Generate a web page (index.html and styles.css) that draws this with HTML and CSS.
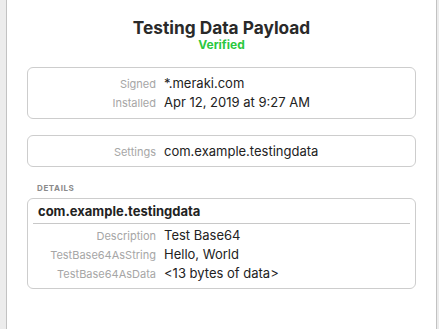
FILE: index.html
```html
<!DOCTYPE html>
<html>
<head>
<meta charset="utf-8">
<link rel="stylesheet" href="styles.css">
</head>
<body>
<div class="panel">
  <header class="head">
    <h1 class="title">Testing Data Payload</h1>
    <div class="status">Verified</div>
  </header>
  <section class="card card-sign">
    <div class="row"><span class="label">Signed</span><span class="value">*.meraki.com</span></div>
    <div class="row"><span class="label">Installed</span><span class="value">Apr 12, 2019 at 9:27 AM</span></div>
  </section>
  <section class="card card-settings">
    <div class="row"><span class="label">Settings</span><span class="value">com.example.testingdata</span></div>
  </section>
  <div class="section-label">DETAILS</div>
  <section class="card card-details">
    <div class="card-title">com.example.testingdata</div>
    <div class="divider"></div>
    <div class="row"><span class="label">Description</span><span class="value">Test Base64</span></div>
    <div class="row"><span class="label">TestBase64AsString</span><span class="value">Hello, World</span></div>
    <div class="row"><span class="label">TestBase64AsData</span><span class="value">&lt;13 bytes of data&gt;</span></div>
  </section>
</div>
</body>
</html>
```

FILE: styles.css
```css
html, body {
  margin: 0;
  padding: 0;
  background: #ececec;
  height: 100%;
}
body {
  font-family: Inter, "Liberation Sans", sans-serif;
  color: #242424;
}
.panel {
  margin-left: 6px;
  width: 431px;
  height: 329px;
  box-sizing: border-box;
  background: #fff;
  border-left: 1px solid #c2c2c2;
  border-right: 1px solid #c2c2c2;
  padding: 17px 20px 0 20px;
}
.head {
  text-align: center;
  margin-bottom: 15px;
}
.title {
  margin: 0;
  font-size: 17.3px;
  line-height: 21px;
  font-weight: 700;
  color: #2a2a2a;
}
.status {
  font-size: 12px;
  line-height: 14px;
  font-weight: 700;
  color: #2bc840;
}
.card {
  border: 1px solid #cdcdcd;
  border-radius: 6px;
  background: #fff;
}
.card-sign {
  padding: 6px 0 6px 0;
  margin-bottom: 16px;
}
.card-settings {
  padding: 6px 0 5px 0;
}
.row {
  display: flex;
  align-items: baseline;
  height: 19px;
  line-height: 19px;
  gap: 8px;
}
.label {
  width: 128px;
  text-align: right;
  font-size: 11px;
  color: #a6a6a6;
  flex: none;
}
.value {
  font-size: 13px;
  color: #222;
}
.section-label {
  margin: 16px 0 4px 10px;
  font-size: 8px;
  line-height: 11px;
  font-weight: 700;
  letter-spacing: 0.6px;
  color: #8a8a8a;
}
.card-details {
  padding: 3px 0 5px 0;
}
.card-title {
  padding-left: 10px;
  font-size: 13px;
  line-height: 19px;
  font-weight: 700;
  color: #222;
}
.divider {
  height: 1px;
  background: #c8c8c8;
  margin: 2px 5px 2px 5px;
}
```
